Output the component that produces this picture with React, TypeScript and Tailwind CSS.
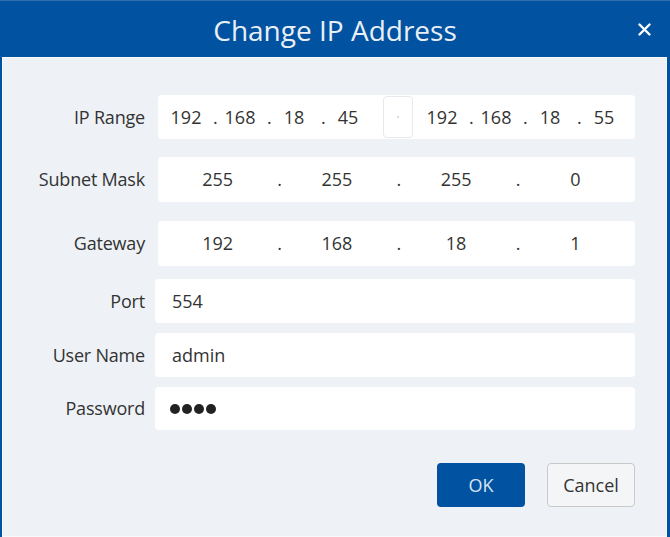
const font = { fontFamily: '"Open Sans", "Noto Sans", sans-serif' };

function Dot() {
  return <span className="relative w-0 shrink-0 overflow-visible">.</span>;
}

function IpPart({ parts, cell }: { parts: string[]; cell: string }) {
  return (
    <div className="flex items-center">
      {parts.map((p, i) => (
        <div key={i} className="flex items-center">
          {i > 0 && <Dot />}
          <span className={`${cell} shrink-0 text-center`}>{p}</span>
        </div>
      ))}
    </div>
  );
}

function WideIp({ parts }: { parts: string[] }) {
  return (
    <div className="flex h-full items-center">
      {parts.map((p, i) => (
        <div key={i} className="flex flex-1 items-center">
          {i > 0 && <Dot />}
          <span className="flex-1 text-center">{p}</span>
        </div>
      ))}
    </div>
  );
}

function Row({
  label,
  top,
  h,
  gap,
  children,
}: {
  label: string;
  top: string;
  h: string;
  gap: string;
  children: React.ReactNode;
}) {
  return (
    <div className={`flex items-center ${top}`}>
      <div className="w-[142px] shrink-0 text-right text-[18px] tracking-[-0.2px] text-[#333]">{label}</div>
      <div className={`${gap} ${h} flex-1 rounded-[4px] bg-white text-[18px] text-[#333]`}>{children}</div>
    </div>
  );
}

export default function App() {
  return (
    <div className="h-[537px] w-[670px] overflow-hidden bg-[#0152a0]" style={font}>
      <div className="relative flex h-[57px] items-center justify-center border-t border-[#2f6fb2]">
        <h1 className="mt-[2px] text-[28px] text-[#e9eff6]">Change IP Address</h1>
        <svg
          className="absolute right-[19px] top-[22px]"
          width="13"
          height="13"
          viewBox="0 0 13 13"
          stroke="white"
          strokeWidth="2.4"
          strokeLinecap="round"
        >
          <path d="M1.5 1.5 11.5 11.5M11.5 1.5 1.5 11.5" />
        </svg>
      </div>
      <div className="ml-[2px] mr-[3px] h-[480px] border border-[#f7f9fb] bg-[#eef2f6] pr-[31px]">
        <Row label="IP Range" top="mt-[37px]" h="h-[44px]" gap="ml-[13px]">
          <div className="flex h-full items-center">
            <div className="ml-[1px] w-[224px]">
              <IpPart parts={["192", "168", "18", "45"]} cell="w-[54px]" />
            </div>
            <div className="flex h-[42px] w-[30px] items-center justify-center rounded-[4px] border border-[#e6e9ee] bg-white">
              <span className="h-[2px] w-[2px] rounded-full bg-[#c8d4e2]" />
            </div>
            <div className="ml-[2px]">
              <IpPart parts={["192", "168", "18", "55"]} cell="w-[54px]" />
            </div>
          </div>
        </Row>
        <Row label="Subnet Mask" top="mt-[18px]" h="h-[45px]" gap="ml-[13px]">
          <WideIp parts={["255", "255", "255", "0"]} />
        </Row>
        <Row label="Gateway" top="mt-[19px]" h="h-[45px]" gap="ml-[13px]">
          <WideIp parts={["192", "168", "18", "1"]} />
        </Row>
        <Row label="Port" top="mt-[13px]" h="h-[44px]" gap="ml-[10px]">
          <div className="flex h-full items-center pl-[17px]">554</div>
        </Row>
        <Row label="User Name" top="mt-[10px]" h="h-[44px]" gap="ml-[10px]">
          <div className="flex h-full items-center pl-[17px]">admin</div>
        </Row>
        <Row label="Password" top="mt-[10px]" h="h-[43px]" gap="ml-[10px]">
          <div className="flex h-full items-center gap-[2px] pl-[15px]">
            {[0, 1, 2, 3].map((i) => (
              <span key={i} className="h-[10px] w-[10px] rounded-full bg-[#222]" />
            ))}
          </div>
        </Row>
        <div className="mt-[33px] flex justify-end gap-[22px]">
          <button className="h-[44px] w-[88px] rounded-[4px] bg-[#0152a0] text-[18px] text-[#d6e4f2]">
            OK
          </button>
          <button className="h-[44px] w-[88px] rounded-[4px] border border-[#c9c9c9] bg-[#f4f5f7] text-[18px] text-[#333]">
            Cancel
          </button>
        </div>
      </div>
    </div>
  );
}
